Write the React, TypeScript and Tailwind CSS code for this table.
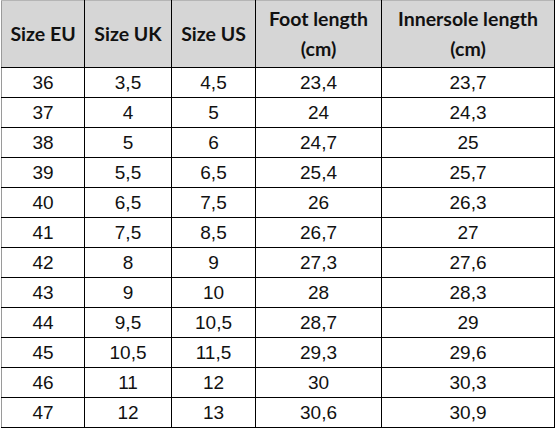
import React from "react"

const rows: string[][] = [
  ["36", "3,5", "4,5", "23,4", "23,7"],
  ["37", "4", "5", "24", "24,3"],
  ["38", "5", "6", "24,7", "25"],
  ["39", "5,5", "6,5", "25,4", "25,7"],
  ["40", "6,5", "7,5", "26", "26,3"],
  ["41", "7,5", "8,5", "26,7", "27"],
  ["42", "8", "9", "27,3", "27,6"],
  ["43", "9", "10", "28", "28,3"],
  ["44", "9,5", "10,5", "28,7", "29"],
  ["45", "10,5", "11,5", "29,3", "29,6"],
  ["46", "11", "12", "30", "30,3"],
  ["47", "12", "13", "30,6", "30,9"],
]

const widths = ["w-[83px]", "w-[87px]", "w-[84px]", "w-[126px]", "w-[173px]"]

const th =
  "border-r border-b border-black font-bold text-[19.5px] leading-[30px] text-[#111] font-['Lato',sans-serif] text-center align-middle p-0"

export default function App() {
  return (
    <div className="w-[556px] h-[428px] bg-white overflow-hidden">
      <div className="pl-px">
        <table className="table-fixed border-collapse border-l border-t border-l-[#9a9a9a] border-t-[#b5b5b5]">
          <colgroup>
            {widths.map((w, i) => (
              <col key={i} className={w} />
            ))}
          </colgroup>
          <thead>
            <tr className="h-[67px] bg-[#d6d6d6]">
              <th className={th}>Size EU</th>
              <th className={th}>Size UK</th>
              <th className={th}>Size US</th>
              <th className={th}>
                Foot length
                <br />
                (cm)
              </th>
              <th className={th}>
                Innersole length
                <br />
                (cm)
              </th>
            </tr>
          </thead>
          <tbody>
            {rows.map((r, i) => (
              <tr key={i} className="h-[30px]">
                {r.map((c, j) => (
                  <td
                    key={j}
                    className="border-r border-b border-black p-0 text-center align-middle text-[19px] leading-none text-[#111] font-['Liberation_Sans',Arial,sans-serif]"
                  >
                    {c}
                  </td>
                ))}
              </tr>
            ))}
          </tbody>
        </table>
      </div>
    </div>
  )
}
